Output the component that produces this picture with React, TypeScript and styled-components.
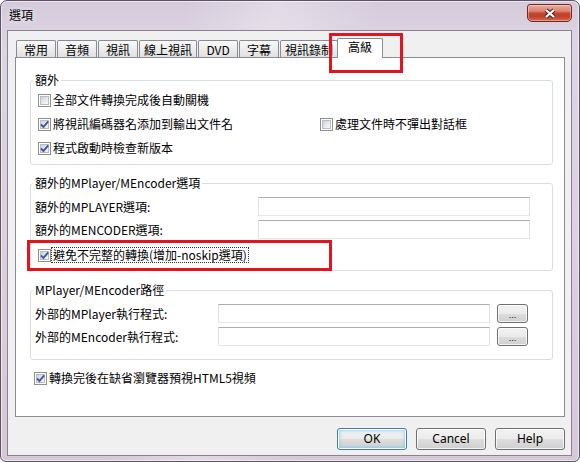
import React from "react";
import styled, { createGlobalStyle, css } from "styled-components";

const GlobalStyle = createGlobalStyle`
  html, body { margin: 0; padding: 0; background: #ffffff; }
  body {
    width: 580px;
    height: 462px;
    overflow: hidden;
    font-family: "Noto Sans CJK TC", "Noto Sans", "Liberation Sans", sans-serif;
    font-size: 12px;
    color: #000;
  }
  * { box-sizing: border-box; }
`;

const Window = styled.div`
  position: relative;
  width: 580px;
  height: 462px;
  border: 1px solid #5d5566;
  border-radius: 7px 7px 6px 6px;
  background:
    linear-gradient(100deg, rgba(255,255,255,0) 28%, rgba(255,255,255,0.3) 42%, rgba(255,255,255,0) 58%),
    linear-gradient(180deg, #d5cadb 0%, #ded5e3 10%, #dad0de 55%, #d6c8d7 100%);
  box-shadow: inset 0 0 0 1px rgba(255,255,255,0.55);
  padding: 0 7px 5px 6px;
  display: flex;
  flex-direction: column;
`;

const TitleBar = styled.div`
  flex: none;
  height: 29px;
  display: flex;
  justify-content: space-between;
  align-items: flex-start;
`;

const Title = styled.div`
  margin: 7px 0 0 2px;
  line-height: 14px;
  font-size: 12px;
  color: #000;
  text-shadow: 0 0 6px rgba(255,255,255,0.95);
`;

const CloseButton = styled.div`
  width: 45px;
  height: 18px;
  margin-top: 3px;
  border: 1px solid #6e2a20;
  border-radius: 3px 3px 5px 5px;
  background: linear-gradient(180deg, #eaaa9c 0%, #dc8471 38%, #c64430 52%, #c0412c 72%, #d86a50 100%);
  box-shadow: inset 0 0 0 1px rgba(255,255,255,0.35);
  display: flex;
  align-items: center;
  justify-content: center;
`;

const Client = styled.div`
  flex: 1;
  display: flex;
  flex-direction: column;
  background: #f0f0f0;
  border: 1px solid #8a8191;
  padding: 7px 6px 5px 7px;
`;

const TabStrip = styled.div`
  display: flex;
  align-items: flex-end;
  gap: 1px;
  height: 20px;
  margin-bottom: -1px;
  padding-left: 1px;
  position: relative;
  z-index: 1;
`;

const Tab = styled.div<{ $active?: boolean }>`
  flex: none;
  position: relative;
  min-width: 40px;
  height: 17px;
  margin: 0 0 1px 0;
  padding: 2px 4px 0;
  border: 1px solid #898c95;
  border-bottom: none;
  border-radius: 2px 2px 0 0;
  background: linear-gradient(180deg, #f8f8f8 0%, #ededed 50%, #e1e1e1 100%);
  line-height: 14px;
  text-align: center;
  white-space: nowrap;
  ${(p) =>
    p.$active &&
    css`
      min-width: 46px;
      height: 20px;
      margin: 0 -2px 0 -2px;
      padding: 1px 4px 0;
      background: #ffffff;
      z-index: 2;
    `}
`;

const Panel = styled.div`
  flex: none;
  height: 360px;
  background: #ffffff;
  border: 1px solid #898c95;
  padding: 15px 11px 0 14px;
  display: flex;
  flex-direction: column;
`;

const Group = styled.fieldset<{ $gap?: number }>`
  margin: ${(p) => p.$gap ?? 0}px 0 0;
  padding: 0;
  min-width: 0;
  border: 1px solid #d5dfe5;
  border-radius: 3px;
`;

const Legend = styled.legend`
  margin-left: 2px;
  padding: 0 2px;
  line-height: 14px;
  font-size: 12px;
`;

const GroupBody = styled.div<{ $pad: string }>`
  padding: ${(p) => p.$pad};
  display: flex;
  flex-direction: column;
`;

const CheckGrid = styled.div`
  display: grid;
  grid-template-columns: 282px 1fr;
  grid-auto-rows: 24px;
`;

const CheckRow = styled.label<{ $col?: number; $h?: number; $indent?: number; $top?: number }>`
  display: flex;
  align-items: center;
  gap: 2px;
  grid-column: ${(p) => p.$col ?? 1};
  height: ${(p) => p.$h ?? 24}px;
  margin-left: ${(p) => p.$indent ?? 0}px;
  margin-top: ${(p) => p.$top ?? 0}px;
`;

const Box = styled.span`
  position: relative;
  flex: none;
  width: 13px;
  height: 13px;
  border: 1px solid #8e8f8f;
  background: #ffffff;
  display: flex;
  align-items: center;
  justify-content: center;
  &::before {
    content: "";
    position: absolute;
    inset: 1px;
    border: 1px solid #b9bec4;
    background: linear-gradient(135deg, #cdd1d6 0%, #e9ebee 60%, #f8f8f8 100%);
  }
  svg {
    position: relative;
    z-index: 1;
  }
`;

const CheckText = styled.span<{ $focus?: boolean }>`
  line-height: 14px;
  white-space: nowrap;
  ${(p) =>
    p.$focus &&
    css`
      outline: 1px dotted #333;
      outline-offset: 0;
      padding: 0 1px;
      margin-left: -1px;
    `}
`;

const InputGrid = styled.div<{ $label: number }>`
  display: grid;
  grid-template-columns: ${(p) => p.$label}px 272px auto;
  grid-auto-rows: 19px;
  row-gap: 4px;
  align-items: center;
`;

const FieldLabel = styled.span`
  line-height: 14px;
  white-space: nowrap;
`;

const TextBox = styled.input`
  width: 272px;
  height: 19px;
  margin: 0;
  padding: 0 3px;
  border: 1px solid;
  border-color: #abadb3 #dbdfe6 #e3e9ef #e2e3ea;
  background: #ffffff;
  font-size: 12px;
  outline: none;
`;

const winButton = css`
  border: 1px solid #707070;
  border-radius: 3px;
  background: linear-gradient(180deg, #f2f2f2 0%, #ebebeb 50%, #dddddd 51%, #cfcfcf 100%);
  box-shadow: inset 0 0 0 1px rgba(255, 255, 255, 0.75);
  color: #000;
  cursor: default;
`;

const BrowseButton = styled.button`
  ${winButton};
  width: 31px;
  height: 19px;
  margin: 0 0 0 7px;
  padding: 3px 0 0;
  font-family: "Liberation Sans", sans-serif;
  font-size: 9px;
  line-height: 1;
`;

const ButtonRow = styled.div`
  display: flex;
  justify-content: flex-end;
  gap: 9px;
  margin-top: 11px;
`;

const DialogButton = styled.button<{ $default?: boolean }>`
  ${winButton};
  width: 70px;
  height: 22px;
  margin: 0;
  padding: 0;
  font-family: "Noto Sans", "Liberation Sans", sans-serif;
  font-size: 12px;
  line-height: 14px;
  ${(p) =>
    p.$default &&
    css`
      border-color: #3c7fb1;
      box-shadow: inset 0 0 0 1px #ffffff, inset 0 0 3px 2px rgba(96, 196, 245, 0.55);
    `}
`;

const Annotation = styled.div<{ $x: number; $y: number; $w: number; $h: number }>`
  position: absolute;
  left: ${(p) => p.$x}px;
  top: ${(p) => p.$y}px;
  width: ${(p) => p.$w}px;
  height: ${(p) => p.$h}px;
  border: 3px solid #e3141e;
  pointer-events: none;
  z-index: 5;
`;

const CheckMark = () => (
  <svg width="11" height="11" viewBox="0 0 11 11">
    <path d="M2 5.4 L4.4 8 L9.2 2.4" fill="none" stroke="#3f56a3" strokeWidth="1.9" />
  </svg>
);

const Check = ({
  label,
  checked,
  focus,
  col,
  h,
  indent,
  top,
}: {
  label: string;
  checked?: boolean;
  focus?: boolean;
  col?: number;
  h?: number;
  indent?: number;
  top?: number;
}) => (
  <CheckRow $col={col} $h={h} $indent={indent} $top={top}>
    <Box>{checked && <CheckMark />}</Box>
    <CheckText $focus={focus}>{label}</CheckText>
  </CheckRow>
);

const tabs = ["常用", "音頻", "視訊", "線上視訊", "DVD", "字幕", "視訊錄制", "高級"];

export default function App() {
  return (
    <>
      <GlobalStyle />
      <Window>
        <TitleBar>
          <Title>選項</Title>
          <CloseButton>
            <svg width="14" height="11" viewBox="0 0 14 11">
              <path d="M3 2 L11 9 M11 2 L3 9" stroke="#47201a" strokeWidth="4.2" />
              <path d="M3 2 L11 9 M11 2 L3 9" stroke="#ffffff" strokeWidth="2.3" />
            </svg>
          </CloseButton>
        </TitleBar>
        <Client>
          <TabStrip>
            {tabs.map((t) => (
              <Tab key={t} $active={t === "高級"}>
                {t}
              </Tab>
            ))}
          </TabStrip>
          <Panel>
            <Group>
              <Legend>額外</Legend>
              <GroupBody $pad="1px 8px 4px 7px">
                <CheckGrid>
                  <Check col={1} label="全部文件轉換完成後自動關機" />
                  <Check col={1} checked label="將視訊編碼器名添加到輸出文件名" />
                  <Check col={2} label="處理文件時不彈出對話框" />
                  <Check col={1} checked label="程式啟動時檢查新版本" />
                </CheckGrid>
              </GroupBody>
            </Group>

            <Group $gap={11}>
              <Legend>額外的MPlayer/MEncoder選項</Legend>
              <GroupBody $pad="7px 20px 5px 4px">
                <InputGrid $label={223}>
                  <FieldLabel>額外的MPLAYER選項:</FieldLabel>
                  <TextBox readOnly />
                  <span />
                  <FieldLabel>額外的MENCODER選項:</FieldLabel>
                  <TextBox readOnly />
                  <span />
                </InputGrid>
                <Check
                  checked
                  focus
                  h={20}
                  indent={3}
                  top={6}
                  label="避免不完整的轉換(增加-noskip選項)"
                />
              </GroupBody>
            </Group>

            <Group $gap={12}>
              <Legend>MPlayer/MEncoder路徑</Legend>
              <GroupBody $pad="7px 0 13px 4px">
                <InputGrid $label={183}>
                  <FieldLabel>外部的MPlayer執行程式:</FieldLabel>
                  <TextBox readOnly />
                  <BrowseButton>...</BrowseButton>
                  <FieldLabel>外部的MEncoder執行程式:</FieldLabel>
                  <TextBox readOnly />
                  <BrowseButton>...</BrowseButton>
                </InputGrid>
              </GroupBody>
            </Group>

            <Check checked h={20} indent={4} top={8} label="轉換完後在缺省瀏覽器預視HTML5視頻" />
          </Panel>
          <ButtonRow>
            <DialogButton $default>OK</DialogButton>
            <DialogButton>Cancel</DialogButton>
            <DialogButton>Help</DialogButton>
          </ButtonRow>
        </Client>
        <Annotation $x={328} $y={32} $w={74} $h={40} />
        <Annotation $x={26} $y={239} $w={305} $h={31} />
      </Window>
    </>
  );
}
